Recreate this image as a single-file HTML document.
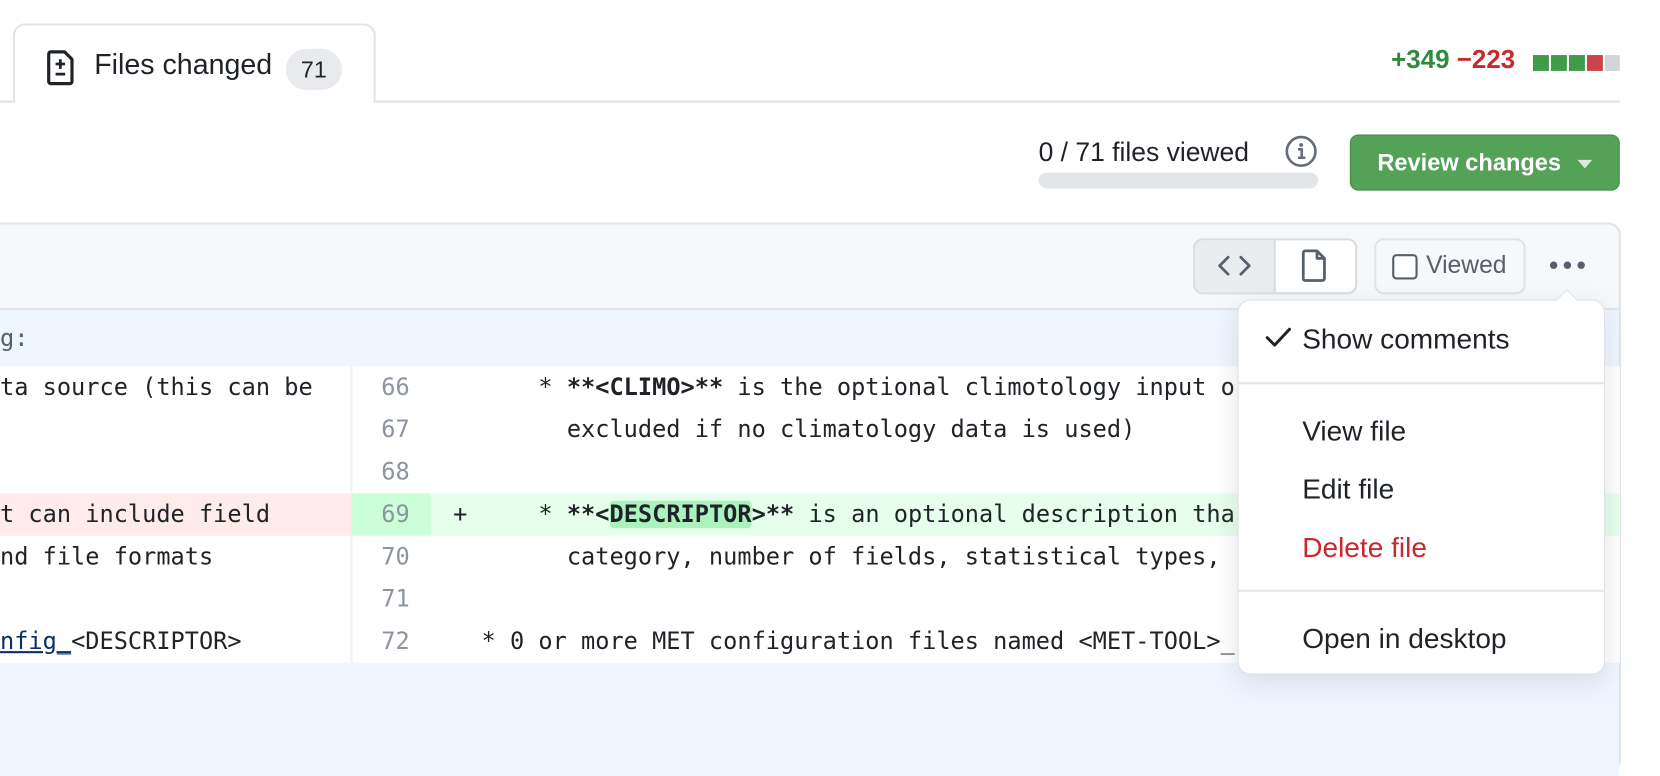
<!DOCTYPE html>
<html><head><meta charset="utf-8"><style>
*{box-sizing:border-box;margin:0;padding:0}
body{width:1660px;height:712px;overflow:hidden;background:#fff;font-family:"Liberation Sans",sans-serif;color:#1f2328;position:relative}
#w{position:absolute;left:0;top:0;width:1568px;height:673px;transform:scale(1.0587);transform-origin:0 0}
.abs{position:absolute}
.mono{font-family:"DejaVu Sans Mono","Liberation Mono",monospace;font-size:22.3px;white-space:pre}
.row{position:absolute;left:0;width:1530px;height:40px}
.ln{position:absolute;left:332px;width:75px;height:40px;text-align:right;padding-right:20px;color:#8c959f;line-height:40px}
.lt{position:absolute;left:0;line-height:40px;color:#1f2328}
.rt{position:absolute;left:428px;line-height:40px;color:#1f2328}
.mi{position:absolute;left:1230px;font-size:26.5px;line-height:30px;color:#1f2328}
</style></head><body><div id="w">
<div class="abs" style="left:0;top:95px;width:1530px;height:2px;background:#e1e4e8"></div>
<div class="abs" style="left:12px;top:22px;width:343px;height:75px;border:2px solid #e1e4e8;border-bottom:none;border-radius:12px 12px 0 0;background:#fff"></div>
<svg class="abs" style="left:44px;top:47px" width="28" height="34" viewBox="0 0 28 34"><path d="M4 2h13l7 7v21a2 2 0 0 1-2 2H4a2 2 0 0 1-2-2V4a2 2 0 0 1 2-2z" fill="none" stroke="#1f2328" stroke-width="3" stroke-linejoin="round"/><path d="M13 9v9M8.5 13.5h9M8.5 23h9" stroke="#1f2328" stroke-width="2.6"/></svg>
<div class="abs" style="left:89px;top:45px;font-size:27px;line-height:32px">Files changed</div>
<div class="abs" style="left:270px;top:46px;width:53px;height:39px;border-radius:20px;background:#e8eaed;font-size:22px;line-height:39px;text-align:center">71</div>
<div class="abs" style="left:1314px;top:43px;font-size:24.5px;font-weight:bold;line-height:28px;white-space:nowrap"><span style="color:#2f8a3c">+349</span> <span style="color:#c42b2f">−223</span></div>
<div class="abs" style="left:1448px;top:52px;width:15px;height:15px;background:#3f9b47"></div>
<div class="abs" style="left:1465px;top:52px;width:15px;height:15px;background:#3f9b47"></div>
<div class="abs" style="left:1482px;top:52px;width:15px;height:15px;background:#3f9b47"></div>
<div class="abs" style="left:1499px;top:52px;width:15px;height:15px;background:#c9434a"></div>
<div class="abs" style="left:1516px;top:52px;width:14px;height:15px;background:#d1d5da"></div>
<div class="abs" style="left:981px;top:129px;font-size:25px;line-height:30px;white-space:nowrap">0 / 71 files viewed</div>
<div class="abs" style="left:981px;top:163px;width:264px;height:15px;border-radius:8px;background:#e3e5e8"></div>
<svg class="abs" style="left:1213px;top:127px" width="32" height="32" viewBox="0 0 32 32"><circle cx="16" cy="16" r="13.5" fill="none" stroke="#656d76" stroke-width="2.5"/><circle cx="16" cy="10" r="1.8" fill="#656d76"/><path d="M13 14h3.5v8M13 22h7" stroke="#656d76" stroke-width="2.4" fill="none"/></svg>
<div class="abs" style="left:1275px;top:127px;width:255px;height:53px;border-radius:8px;background:#53a258;border:1px solid #3f8c45;color:#fff;font-weight:bold;font-size:22.3px;line-height:51px;padding-left:25px;white-space:nowrap">Review changes</div>
<svg class="abs" style="left:1489px;top:150px" width="16" height="10"><path d="M1 1h14L8 9z" fill="#d7ecd8"/></svg>
<div class="abs" style="left:-10px;top:210px;width:1541px;height:520px;border:2px solid #e1e4e8;border-radius:12px;background:#f6f8fa"></div>
<div class="abs" style="left:0;top:291px;width:1529px;height:2px;background:#e1e4e8"></div>
<div class="abs" style="left:0;top:293px;width:1529px;height:440px;background:#f0f6ff"></div>
<div class="abs" style="left:1127px;top:225px;width:155px;height:53px;border:2px solid #d8dde2;border-radius:9px;background:#fff;overflow:hidden"><div style="width:76px;height:100%;background:#eaedf0;border-right:2px solid #d8dde2"></div></div>
<svg class="abs" style="left:1150px;top:238px" width="32" height="26" viewBox="0 0 32 26"><path d="M10 5l-8 8 8 8M22 5l8 8-8 8" fill="none" stroke="#57606a" stroke-width="2.6" stroke-linecap="round" stroke-linejoin="round"/></svg>
<svg class="abs" style="left:1229px;top:235px" width="26" height="32" viewBox="0 0 26 32"><path d="M4 2h11l7 7v19a2 2 0 0 1-2 2H4a2 2 0 0 1-2-2V4a2 2 0 0 1 2-2z M15 2v7h7" fill="none" stroke="#57606a" stroke-width="2.6" stroke-linejoin="round"/></svg>
<div class="abs" style="left:1298px;top:225px;width:143px;height:53px;border:2px solid #e1e4e8;border-radius:9px;background:#f6f8fa"></div>
<div class="abs" style="left:1315px;top:240px;width:24px;height:24px;border:2px solid #57606a;border-radius:4px;background:#fff"></div>
<div class="abs" style="left:1347px;top:236px;font-size:23.3px;line-height:28px;color:#57606a">Viewed</div>
<div class="abs" style="left:1464px;top:247px;width:7px;height:7px;border-radius:50%;background:#57606a"></div>
<div class="abs" style="left:1477px;top:247px;width:7px;height:7px;border-radius:50%;background:#57606a"></div>
<div class="abs" style="left:1490px;top:247px;width:7px;height:7px;border-radius:50%;background:#57606a"></div>
<div class="abs mono" style="left:0;top:305px;color:#57606a;line-height:30px">g:</div>
<div class="row" style="top:346px;height:280px;background:#fff"></div>
<div class="abs" style="left:331px;top:346px;width:2px;height:280px;background:#f0f1f3"></div>
<div class="row" style="top:346px"><span class="lt mono">ta source (this can be</span><span class="ln mono">66</span><span class="rt mono">      * <b>**&lt;CLIMO&gt;**</b> is the optional climotology input o</span></div>
<div class="row" style="top:386px"><span class="ln mono">67</span><span class="rt mono">        excluded if no climatology data is used)</span></div>
<div class="row" style="top:426px"><span class="ln mono">68</span></div>
<div class="row" style="top:466px"><div class="abs" style="left:0;top:0;width:332px;height:40px;background:#ffebe9"></div><div class="abs" style="left:332px;top:0;width:75px;height:40px;background:#ccffd8"></div><div class="abs" style="left:407px;top:0;width:1123px;height:40px;background:#e6ffec"></div><span class="lt mono">t can include field</span><span class="ln mono">69</span><span class="rt mono">+     * <b>**&lt;<span style="background:#abf2bc;border-radius:4px">DESCRIPTOR</span>&gt;**</b> is an optional description tha</span></div>
<div class="row" style="top:506px"><span class="lt mono">nd file formats</span><span class="ln mono">70</span><span class="rt mono">        category, number of fields, statistical types,</span></div>
<div class="row" style="top:546px"><span class="ln mono">71</span></div>
<div class="row" style="top:586px"><span class="lt mono"><span style="color:#0a3069;text-decoration:underline">nfig_</span>&lt;DESCRIPTOR&gt;</span><span class="ln mono">72</span><span class="rt mono">  * 0 or more MET configuration files named &lt;MET-TOOL&gt;_</span></div>
<div class="abs" style="left:1169px;top:283px;width:347px;height:354px;background:#fff;border:1px solid #dfe2e6;border-radius:12px;box-shadow:0 8px 24px rgba(140,149,159,0.25)"></div>
<div class="abs" style="left:1473px;top:276px;width:14px;height:14px;background:#fff;border-left:1px solid #dfe2e6;border-top:1px solid #dfe2e6;transform:rotate(45deg)"></div>
<svg class="abs" style="left:1195px;top:308px" width="26" height="22" viewBox="0 0 26 22"><path d="M2 11l7 7L23 3" fill="none" stroke="#1f2328" stroke-width="2.8" stroke-linecap="round" stroke-linejoin="round"/></svg>
<div class="mi" style="top:305px">Show comments</div>
<div class="abs" style="left:1170px;top:361px;width:345px;height:2px;background:#e4e6e9"></div>
<div class="mi" style="top:392px">View file</div>
<div class="mi" style="top:447px">Edit file</div>
<div class="mi" style="top:502px;color:#c9282e">Delete file</div>
<div class="abs" style="left:1170px;top:557px;width:345px;height:2px;background:#e4e6e9"></div>
<div class="mi" style="top:588px">Open in desktop</div>
</div></body></html>
